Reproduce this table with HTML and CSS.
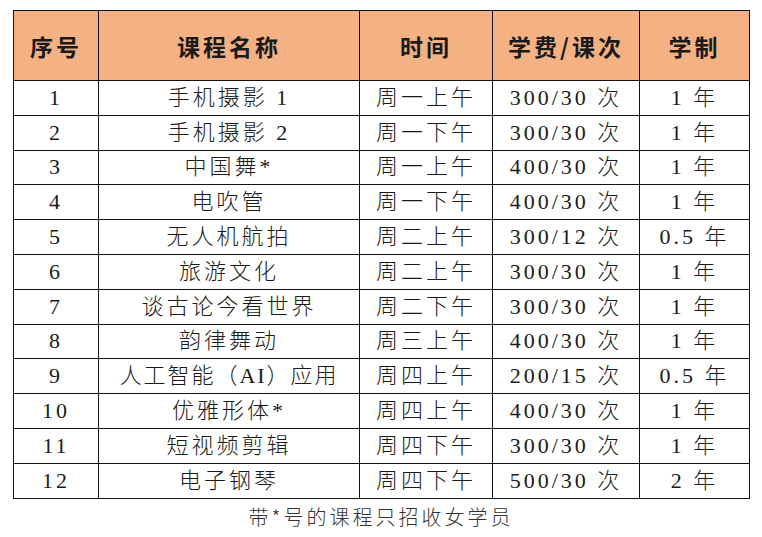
FILE: index.html
```html
<!DOCTYPE html>
<html lang="zh">
<head>
<meta charset="utf-8">
<link rel="stylesheet" href="styles.css">
</head>
<body>
<div class="page">
<table class="courses">
  <colgroup>
    <col class="c1"><col class="c2"><col class="c3"><col class="c4"><col class="c5">
  </colgroup>
  <thead>
    <tr><th>序号</th><th>课程名称</th><th>时间</th><th>学费/课次</th><th>学制</th></tr>
  </thead>
  <tbody>
    <tr><td>1</td><td>手机摄影 1</td><td>周一上午</td><td>300/30 次</td><td>1 年</td></tr>
    <tr><td>2</td><td>手机摄影 2</td><td>周一下午</td><td>300/30 次</td><td>1 年</td></tr>
    <tr><td>3</td><td>中国舞*</td><td>周一上午</td><td>400/30 次</td><td>1 年</td></tr>
    <tr><td>4</td><td>电吹管</td><td>周一下午</td><td>400/30 次</td><td>1 年</td></tr>
    <tr><td>5</td><td>无人机航拍</td><td>周二上午</td><td>300/12 次</td><td>0.5 年</td></tr>
    <tr><td>6</td><td>旅游文化</td><td>周二上午</td><td>300/30 次</td><td>1 年</td></tr>
    <tr><td>7</td><td>谈古论今看世界</td><td>周二下午</td><td>300/30 次</td><td>1 年</td></tr>
    <tr><td>8</td><td>韵律舞动</td><td>周三上午</td><td>400/30 次</td><td>1 年</td></tr>
    <tr><td>9</td><td class="tight">人工智能（AI）应用</td><td>周四上午</td><td>200/15 次</td><td>0.5 年</td></tr>
    <tr><td>10</td><td>优雅形体*</td><td>周四上午</td><td>400/30 次</td><td>1 年</td></tr>
    <tr><td>11</td><td>短视频剪辑</td><td>周四下午</td><td>300/30 次</td><td>1 年</td></tr>
    <tr><td>12</td><td>电子钢琴</td><td>周四下午</td><td>500/30 次</td><td>2 年</td></tr>
  </tbody>
</table>
<p class="note">带*号的课程只招收女学员</p>
</div>
</body>
</html>
```

FILE: styles.css
```css
html, body {
  margin: 0;
  padding: 0;
  background: #ffffff;
}
.page {
  padding: 10px 0 0 13px;
  width: 736px;
}
.courses {
  border-collapse: collapse;
  width: 736px;
  table-layout: fixed;
  font-family: "Liberation Serif", "Noto Sans CJK SC", serif;
  color: #1a1a1a;
}
.c1 { width: 85px; }
.c2 { width: 261px; }
.c3 { width: 133px; }
.c4 { width: 147px; }
.c5 { width: 110px; }
.courses th, .courses td {
  border: 1.5px solid #111;
  text-align: center;
  padding: 0;
}
.courses th {
  background: #f4b183;
  height: 69px;
  font-family: "Noto Sans CJK SC", sans-serif;
  font-weight: 700;
  font-size: 23px;
  letter-spacing: 3px;
  color: #1a1a1a;
}
.courses td {
  height: 33.8px;
  font-size: 22px;
  font-weight: 300;
  letter-spacing: 3px;
  line-height: 1;
}
.courses td.tight {
  letter-spacing: 2px;
}
.note {
  margin: 3px 0 0 0;
  text-align: center;
  font-family: "Noto Sans CJK SC", sans-serif;
  font-weight: 300;
  font-size: 20px;
  letter-spacing: 3px;
  color: #333;
}
```
